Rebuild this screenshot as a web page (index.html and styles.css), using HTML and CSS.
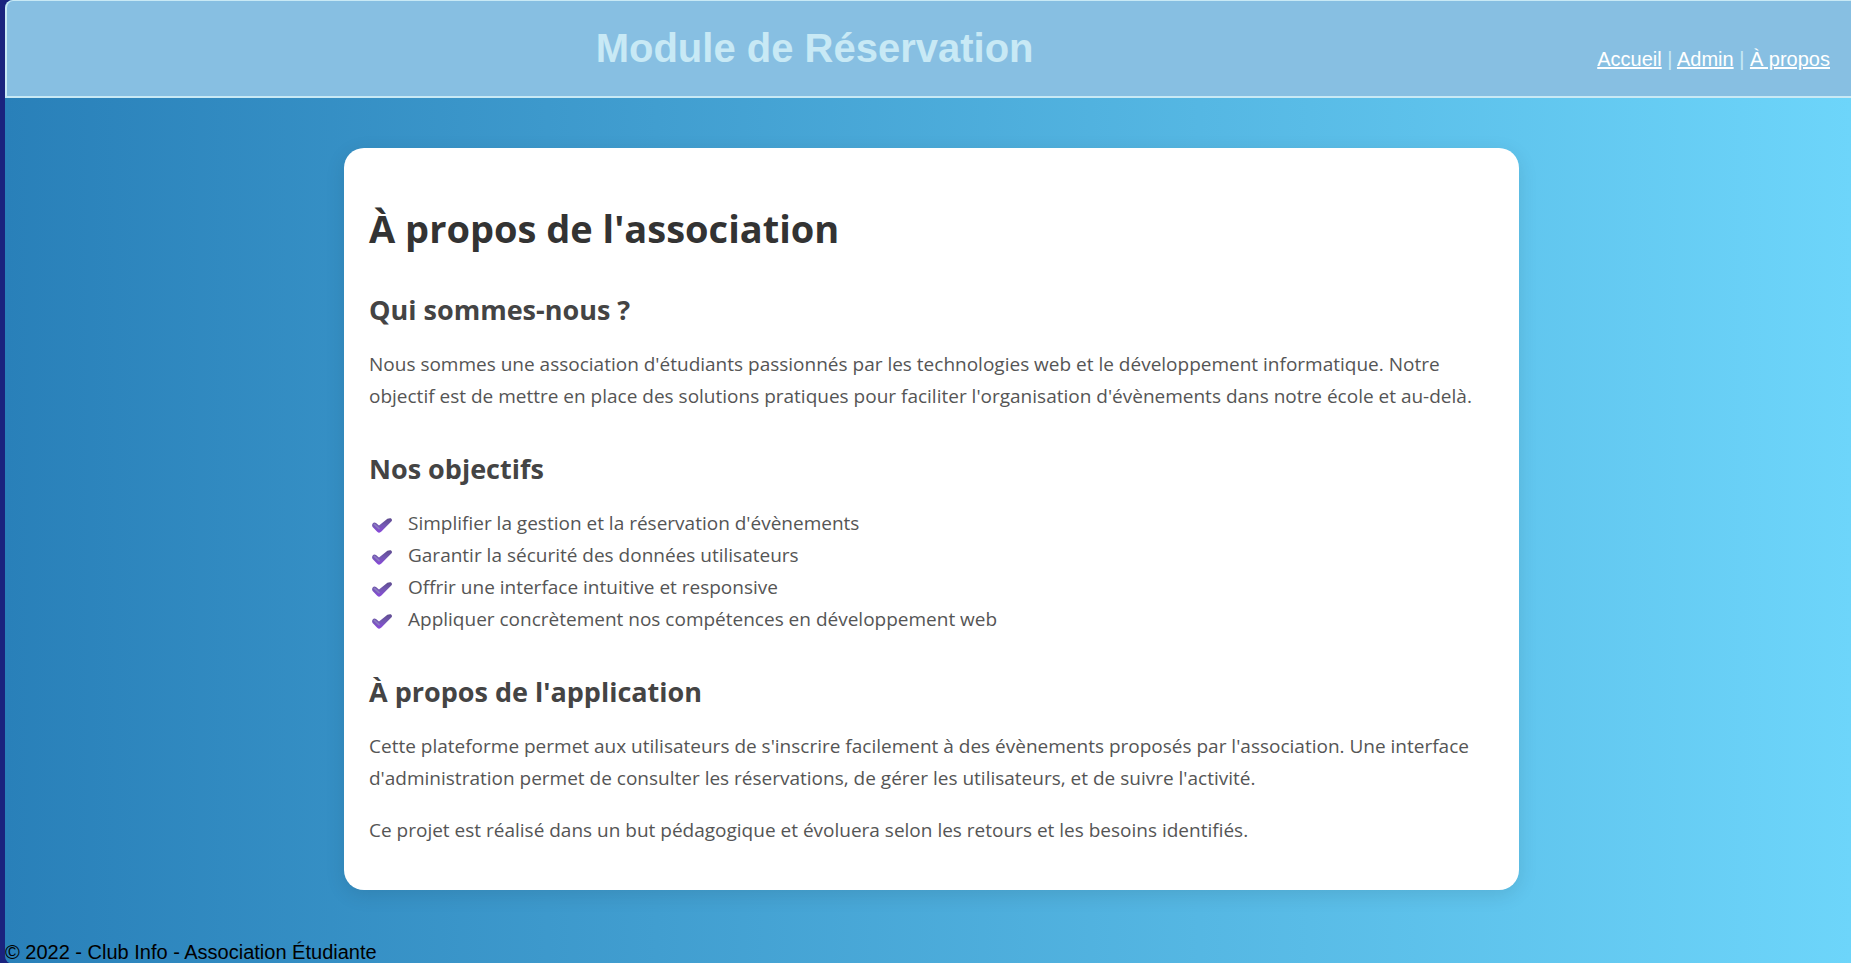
FILE: index.html
```html
<!DOCTYPE html>
<html lang="fr">
<head>
<meta charset="utf-8">
<meta name="viewport" content="width=device-width, initial-scale=1">
<title>Module de Réservation</title>
<link rel="stylesheet" href="styles.css">
</head>
<body>
<svg class="defs" aria-hidden="true">
  <defs>
    <linearGradient id="check-fill" x1="0" y1="0" x2="0" y2="1">
      <stop offset="0" stop-color="#5e4b8e"/>
      <stop offset="0.5" stop-color="#7458b4"/>
      <stop offset="1" stop-color="#8a48dc"/>
    </linearGradient>
    <symbol id="check" viewBox="0 0 20 15">
      <path d="M0.7 5.4Q2.2 3.6 4 5L7 7.4 15.4 0.8Q17 0 18.7 0.2 20.4 0.8 19.8 3L9.4 13.6Q7.3 15.6 5.2 13.8L0.6 8.9Q-0.5 7.2 0.7 5.4Z" fill="url(#check-fill)"/>
      <path d="M2.4 6.4 7 10.6" fill="none" stroke="#8b7ac2" stroke-width="1.8" stroke-linecap="round"/>
    </symbol>
  </defs>
</svg>
<div class="page">
  <header class="header">
    <h1 class="brand">Module de Réservation</h1>
    <nav class="nav">
      <a href="#accueil">Accueil</a> | <a href="#admin">Admin</a> | <a href="#apropos">À propos</a>
    </nav>
  </header>
  <main class="main">
    <article class="card">
      <h1 class="title">À propos de l'association</h1>
      <section>
        <h2 class="subtitle">Qui sommes-nous ?</h2>
        <p class="text">Nous sommes une association d'étudiants passionnés par les technologies web et le développement informatique. Notre objectif est de mettre en place des solutions pratiques pour faciliter l'organisation d'évènements dans notre école et au-delà.</p>
      </section>
      <section>
        <h2 class="subtitle">Nos objectifs</h2>
        <ul class="goals">
          <li><svg class="check" aria-hidden="true"><use href="#check"/></svg>Simplifier la gestion et la réservation d'évènements</li>
          <li><svg class="check" aria-hidden="true"><use href="#check"/></svg>Garantir la sécurité des données utilisateurs</li>
          <li><svg class="check" aria-hidden="true"><use href="#check"/></svg>Offrir une interface intuitive et responsive</li>
          <li><svg class="check" aria-hidden="true"><use href="#check"/></svg>Appliquer concrètement nos compétences en développement web</li>
        </ul>
      </section>
      <section>
        <h2 class="subtitle">À propos de l'application</h2>
        <p class="text">Cette plateforme permet aux utilisateurs de s'inscrire facilement à des évènements proposés par l'association. Une interface d'administration permet de consulter les réservations, de gérer les utilisateurs, et de suivre l'activité.</p>
        <p class="text">Ce projet est réalisé dans un but pédagogique et évoluera selon les retours et les besoins identifiés.</p>
      </section>
    </article>
  </main>
  <footer class="footer">© 2022 - Club Info - Association Étudiante</footer>
</div>
</body>
</html>
```
FILE: styles.css
```css
* {
  box-sizing: border-box;
}

html {
  background: #1a237e;
}

body {
  margin: 0 0 0 5px;
  font-family: "Liberation Sans", Arial, sans-serif;
  font-size: 20px;
}

.defs {
  display: block;
  width: 0;
  height: 0;
}

.page {
  display: flex;
  flex-direction: column;
  min-height: 100vh;
  border-radius: 8px 0 0 8px;
  background: linear-gradient(to right, #2980b9, #6dd5fa);
}

.header {
  display: flex;
  align-items: center;
  min-height: 98px;
  padding: 0 21px 0 25px;
  border: solid #c8e9f5;
  border-width: 1px 0 2px 2px;
  border-radius: 8px 0 0 0;
  background: #87bfe2;
  color: #c8e9f5;
}

.brand {
  flex: 1;
  margin: 0;
  padding-bottom: 2px;
  font-size: 40px;
  line-height: 48px;
  text-align: center;
}

.nav {
  padding-top: 20px;
  line-height: 24px;
}

.nav a {
  color: #fff;
}

.main {
  flex: 1;
  padding: 50px 18px 50px 25px;
}

.card {
  max-width: 1175px;
  margin: 0 auto;
  padding: 55px 25px 24px;
  border-radius: 20px;
  background: #fff;
  box-shadow: 0 5px 20px rgba(0, 0, 0, 0.1);
  font-family: "Segoe UI", "Open Sans", sans-serif;
}

.title {
  margin: 0;
  color: #333;
  font-size: 38px;
  line-height: 50px;
}

.subtitle {
  margin: 35px 0 16px;
  color: #444;
  font-size: 27px;
  line-height: 44px;
}

.text {
  margin: 0 0 20px;
  color: #555;
  font-size: 19px;
  line-height: 32px;
}

.goals {
  margin: 0;
  padding: 0;
  color: #555;
  font-size: 19px;
  line-height: 32px;
  list-style: none;
}

.goals li {
  display: flex;
  align-items: center;
  gap: 16px;
  padding-left: 3px;
}

.check {
  flex: none;
  width: 20px;
  height: 19px;
  padding-top: 4px;
}

.footer {
  line-height: 24px;
}
```
